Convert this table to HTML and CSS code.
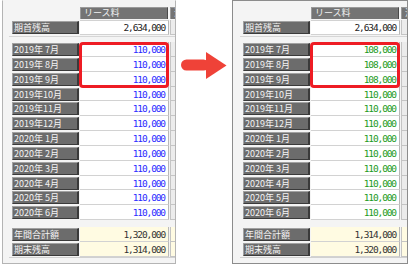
FILE: index.html
```html
<!DOCTYPE html>
<html lang="ja">
<head>
<meta charset="utf-8">
<link rel="stylesheet" href="styles.css">
</head>
<body>
<div class="stage">
  <div class="panel panel-left">
    <div class="row head"><div class="sp"></div><div class="hd">リース料</div><div class="hd x">消費税</div></div>
    <div class="row top"><div class="lbl">期首残高</div><div class="val">2,634,000</div><div class="ext"></div></div>
    <div class="grp months blue">
      <div class="row m"><div class="lbl">2019年 7月</div><div class="val">110,000</div><div class="ext"></div></div>
      <div class="row m"><div class="lbl">2019年 8月</div><div class="val">110,000</div><div class="ext"></div></div>
      <div class="row m"><div class="lbl">2019年 9月</div><div class="val">110,000</div><div class="ext"></div></div>
      <div class="row m"><div class="lbl">2019年10月</div><div class="val">110,000</div><div class="ext"></div></div>
      <div class="row m"><div class="lbl">2019年11月</div><div class="val">110,000</div><div class="ext"></div></div>
      <div class="row m"><div class="lbl">2019年12月</div><div class="val">110,000</div><div class="ext"></div></div>
      <div class="row m"><div class="lbl">2020年 1月</div><div class="val">110,000</div><div class="ext"></div></div>
      <div class="row m"><div class="lbl">2020年 2月</div><div class="val">110,000</div><div class="ext"></div></div>
      <div class="row m"><div class="lbl">2020年 3月</div><div class="val">110,000</div><div class="ext"></div></div>
      <div class="row m"><div class="lbl">2020年 4月</div><div class="val">110,000</div><div class="ext"></div></div>
      <div class="row m"><div class="lbl">2020年 5月</div><div class="val">110,000</div><div class="ext"></div></div>
      <div class="row m"><div class="lbl">2020年 6月</div><div class="val">110,000</div><div class="ext"></div></div>
    </div>
    <div class="grp sum">
      <div class="row s"><div class="lbl">年間合計額</div><div class="val">1,320,000</div><div class="ext"></div></div>
      <div class="row s"><div class="lbl">期末残高</div><div class="val">1,314,000</div><div class="ext"></div></div>
    </div>
    <div class="hl"></div>
  </div>

  <div class="arrow">
    <svg width="46" height="27" viewBox="0 0 46 27">
      <rect x="0" y="7.5" width="28" height="11" rx="5.5" fill="#ef4238"/>
      <polygon points="25,0 45.5,13.5 25,27" fill="#ef4238"/>
    </svg>
  </div>

  <div class="panel panel-right">
    <div class="row head"><div class="sp"></div><div class="hd">リース料</div><div class="hd x">消費税</div></div>
    <div class="row top"><div class="lbl">期首残高</div><div class="val">2,634,000</div><div class="ext"></div></div>
    <div class="grp months green">
      <div class="row m"><div class="lbl">2019年 7月</div><div class="val">108,000</div><div class="ext"></div></div>
      <div class="row m"><div class="lbl">2019年 8月</div><div class="val">108,000</div><div class="ext"></div></div>
      <div class="row m"><div class="lbl">2019年 9月</div><div class="val">108,000</div><div class="ext"></div></div>
      <div class="row m"><div class="lbl">2019年10月</div><div class="val">110,000</div><div class="ext"></div></div>
      <div class="row m"><div class="lbl">2019年11月</div><div class="val">110,000</div><div class="ext"></div></div>
      <div class="row m"><div class="lbl">2019年12月</div><div class="val">110,000</div><div class="ext"></div></div>
      <div class="row m"><div class="lbl">2020年 1月</div><div class="val">110,000</div><div class="ext"></div></div>
      <div class="row m"><div class="lbl">2020年 2月</div><div class="val">110,000</div><div class="ext"></div></div>
      <div class="row m"><div class="lbl">2020年 3月</div><div class="val">110,000</div><div class="ext"></div></div>
      <div class="row m"><div class="lbl">2020年 4月</div><div class="val">110,000</div><div class="ext"></div></div>
      <div class="row m"><div class="lbl">2020年 5月</div><div class="val">110,000</div><div class="ext"></div></div>
      <div class="row m"><div class="lbl">2020年 6月</div><div class="val">110,000</div><div class="ext"></div></div>
    </div>
    <div class="grp sum">
      <div class="row s"><div class="lbl">年間合計額</div><div class="val">1,314,000</div><div class="ext"></div></div>
      <div class="row s"><div class="lbl">期末残高</div><div class="val">1,320,000</div><div class="ext"></div></div>
    </div>
    <div class="hl"></div>
  </div>
</div>
</body>
</html>
```

FILE: styles.css
```css
html, body {
  margin: 0;
  padding: 0;
  background: #ffffff;
}
body {
  width: 409px;
  height: 265px;
  overflow: hidden;
  font-family: "Noto Sans CJK JP", "DejaVu Sans", sans-serif;
}
.stage {
  display: flex;
  align-items: flex-start;
  padding-left: 2px;
}
.panel {
  position: relative;
  box-sizing: border-box;
  width: 174px;
  height: 264px;
  border: 1px solid #b4b4b4;
  background: #f4f4f4;
  overflow: hidden;
  padding: 6px 0 0 9px;
}
.panel-left {
  border-top-color: #f4f4f4;
}
.panel-right {
  width: 176px;
  border-color: #8c8c8c;
  padding-left: 10px;
}
.arrow {
  width: 56px;
  padding-top: 52px;
  padding-left: 5px;
  box-sizing: border-box;
}
.arrow svg { display: block; }

.row {
  display: flex;
  height: 15px;
  box-sizing: border-box;
}
.row.head { height: 12px; }
.row.top { margin-top: 1px; }
.row.m { height: 14.85px; }

.sp { width: 68px; flex: none; }
.hd {
  flex: none;
  width: 88px;
  box-sizing: border-box;
  background: #747474;
  border-top: 1px solid #9a9a9a;
  border-left: 1px solid #9a9a9a;
  border-right: 1px solid #4a4a4a;
  color: #f2f2f2;
  font-size: 9px;
  line-height: 10px;
  padding-left: 3px;
  white-space: nowrap;
  overflow: hidden;
}
.hd.x {
  width: 40px;
  margin-left: 2px;
}

.lbl {
  flex: none;
  width: 67px;
  height: 13px;
  margin-top: 1px;
  box-sizing: border-box;
  background: #6c6c6c;
  border-top: 1px solid #a2a2a2;
  border-left: 1px solid #a2a2a2;
  border-bottom: 1px solid #3a3a3a;
  border-right: 2px solid #3a3a3a;
  color: #f4f4f4;
  font-size: 9px;
  line-height: 11px;
  padding-left: 1px;
  white-space: pre;
  overflow: hidden;
}
.val {
  flex: none;
  width: 89px;
  margin-left: 1px;
  box-sizing: border-box;
  background: #ffffff;
  border-bottom: 1px solid #d2d2d2;
  border-right: 1px solid #b8b8b8;
  text-align: right;
  font-family: "DejaVu Sans Mono", "Liberation Mono", monospace;
  font-size: 9.5px;
  letter-spacing: -1.1px;
  line-height: 15px;
  padding-right: 3px;
  color: #222222;
  white-space: nowrap;
}
.row.top .val {
  border-top: 1px solid #d2d2d2;
  line-height: 13px;
}
.ext {
  flex: none;
  width: 40px;
  margin-left: 1px;
  box-sizing: border-box;
  background: #ececec;
  border-bottom: 1px solid #c4c4c4;
  border-left: 1px solid #c4c4c4;
}

.grp.months {
  margin-top: 1px;
  padding-top: 5px;
  border-top: 1px solid #d6d6d6;
  margin-left: -3px;
  padding-left: 3px;
}
.blue .val { color: #2a2aff; }
.green .val { color: #1c9a1c; }

.grp.sum {
  margin-top: 7px;
  margin-left: -3px;
  padding-left: 3px;
  border-bottom: 1px solid #d0d0d0;
}
.sum .val {
  background: #fffbe2;
  color: #333333;
}
.sum .ext { background: #fffbe2; }

.hl {
  position: absolute;
  left: 76px;
  top: 41px;
  width: 90px;
  height: 46px;
  box-sizing: border-box;
  border: 3px solid #ee1c24;
  border-radius: 4px;
}
.panel-right .hl {
  left: 77px;
}
```
